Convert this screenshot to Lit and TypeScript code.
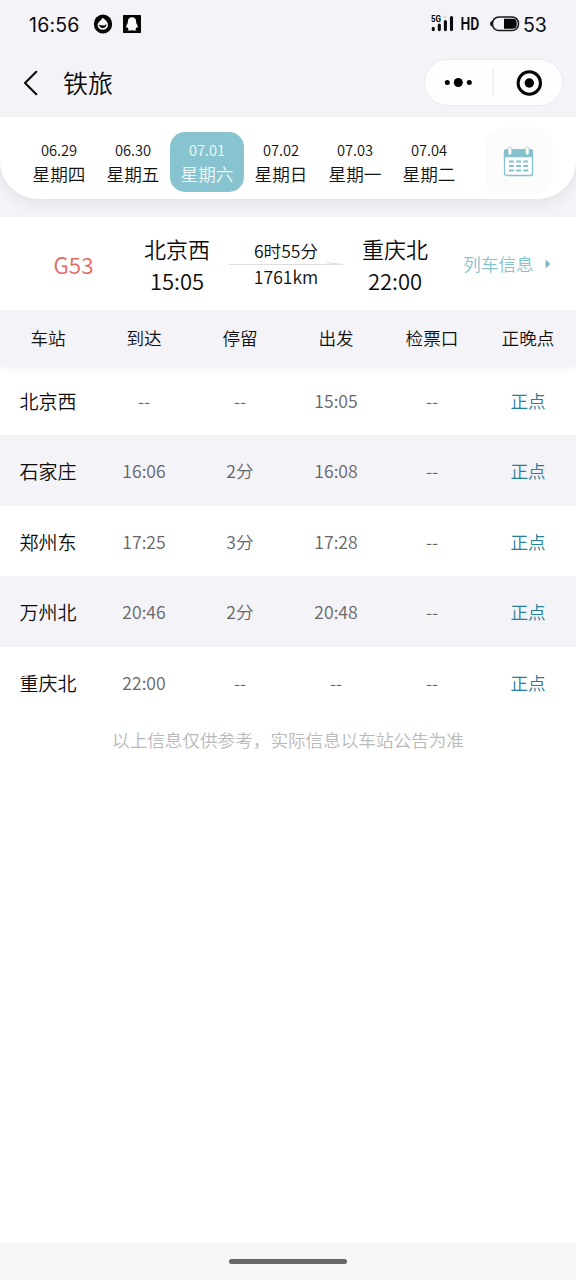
import { LitElement, html, css } from "lit";
import { customElement, state } from "lit/decorators.js";
import { classMap } from "lit/directives/class-map.js";

interface Day { date: string; week: string }
interface Stop { name: string; arrive: string; stay: string; depart: string; gate: string; status: string }

const DAYS: Day[] = [
  { date: "06.29", week: "星期四" },
  { date: "06.30", week: "星期五" },
  { date: "07.01", week: "星期六" },
  { date: "07.02", week: "星期日" },
  { date: "07.03", week: "星期一" },
  { date: "07.04", week: "星期二" },
];

const STOPS: Stop[] = [
  { name: "北京西", arrive: "--", stay: "--", depart: "15:05", gate: "--", status: "正点" },
  { name: "石家庄", arrive: "16:06", stay: "2分", depart: "16:08", gate: "--", status: "正点" },
  { name: "郑州东", arrive: "17:25", stay: "3分", depart: "17:28", gate: "--", status: "正点" },
  { name: "万州北", arrive: "20:46", stay: "2分", depart: "20:48", gate: "--", status: "正点" },
  { name: "重庆北", arrive: "22:00", stay: "--", depart: "--", gate: "--", status: "正点" },
];

const COLUMNS = ["车站", "到达", "停留", "出发", "检票口", "正晚点"];

@customElement("status-bar")
class StatusBar extends LitElement {
  static styles = css`
    :host { display: flex; height: 48px; padding: 0 29px; align-items: center; box-sizing: border-box;
      font-family: Inter, "Noto Sans", sans-serif; color: #0b0b0d; }
    .time { font-size: 19.500px; line-height: 24px; width: 64px; padding-top: 1px; letter-spacing: .2px; }
    .left, .right { display: flex; align-items: center; }
    .right { margin-left: auto; }
    .app { margin-right: 10px; display: block; }
    .hd { font: 600 19px/24px "Roboto", sans-serif; width: 20px; margin-left: 6px; margin-right: 1px; display: flex; justify-content: center; }
    .hd span { display: block; transform: scaleX(.73); }
    .battery { margin-left: 8px; display: block; }
    .level { font-size: 19.500px; line-height: 24px; margin-left: 3px; width: 24px; padding-top: 1px; }
    svg { display: block; }
    .gen { font: 700 8.500px "Roboto", sans-serif; }
  `;
  render() {
    return html`
      <div class="left">
        <span class="time">16:56</span>
        <svg class="app" width="20" height="20" viewBox="0 0 20 20">
          <ellipse cx="10" cy="10" rx="9.2" ry="9.6" fill="#060606" />
          <path d="M9.6 3.8C12 5.4 15 8 15 11a5.2 4.8 0 0 1-10.400 0C4.600 8.400 7.500 7.200 9.600 3.800Z" fill="#f4f3f8" />
          <path d="M5.800 10.300c1.200 1.700 2.400.5 4.100 1.100 1.800.6 2.300-.9 3.600-1.500-.1 2.500-1.500 4.100-3.800 4.100-2.100 0-3.500-1.400-3.900-3.700Z" fill="#060606" />
        </svg>
        <svg width="18" height="18" viewBox="0 0 18 18">
          <rect width="18" height="18" rx=".6" fill="#060606" />
          <path d="M9 2.200c2.700 0 4.100 1.900 4.100 4.300 0 1.100.2 1.700.8 2.700.7 1.200 1 2.400.7 3.300-.3.600-.8.200-1.200-.3-.2.900-.6 1.500-1.100 2 .6.300 1 .7.900 1.300H9.700l-.7-.4-.7.400H4.800c-.1-.6.300-1 .9-1.300-.5-.5-.9-1.100-1.100-2-.4.500-.9.900-1.200.3-.3-.9 0-2.100.7-3.300.6-1 .8-1.600.8-2.700C4.900 4.100 6.300 2.200 9 2.200Z" fill="#fbfbfd" />
        </svg>
      </div>
      <div class="right">
        <svg width="23" height="18" viewBox="0 0 23 18">
          <text class="gen" x="0" y="7" textLength="10" lengthAdjust="spacingAndGlyphs">5G</text>
          <g stroke="#0b0b0d" stroke-width="3.100" stroke-linecap="round">
            <path d="M2.300 13.200v1.400M8.300 10v4.600M14.400 6.500v8.100M20.500 2.500v12.100" />
          </g>
          <path d="M12.600 2h3.200" stroke="#c5c5c9" stroke-width="1" />
        </svg>
        <div class="hd"><span>HD</span></div>
        <svg class="battery" width="31" height="18" viewBox="0 0 31 18">
          <rect x="3.500" y="2" width="26" height="13.600" rx="6.400" fill="none" stroke="#17171a" stroke-width="1.500" />
          <path d="M3.300 5.800Q1 6.500 1 8.800t2.300 3Z" fill="#17171a" />
          <path d="M15 3.800h8.700a4 4 0 0 1 4 4v2a4 4 0 0 1-4 4H15Z" fill="#060606" />
        </svg>
        <span class="level">53</span>
      </div>`;
  }
}

@customElement("nav-bar")
class NavBar extends LitElement {
  static styles = css`
    :host { display: flex; height: 69px; box-sizing: border-box; padding: 0 13px 0 22px; align-items: center;
      font-family: "Noto Sans CJK SC", sans-serif; font-weight: 350; }
    .back { display: block; }
    .title { font-size: 25px; line-height: 36px; margin: 0 0 2px 24px; color: #0a0a0a; }
    .capsule { margin-left: auto; width: 139px; height: 47px; box-sizing: border-box; border: 1px solid #ebebef;
      border-radius: 24px; background: #fefefe; display: flex; align-items: center; justify-content: center; }
    .capsule svg { display: block; }
  `;
  render() {
    return html`
      <svg class="back" width="17" height="28" viewBox="0 0 17 28">
        <path d="M14.300 2.800 3 14l11.300 11.200" fill="none" stroke="#0a0a0a" stroke-width="2.100" stroke-linecap="round" stroke-linejoin="round" />
      </svg>
      <span class="title">铁旅</span>
      <div class="capsule">
        <svg width="137" height="45" viewBox="0 0 137 45">
          <circle cx="22.300" cy="22.500" r="2.500" /><circle cx="33.300" cy="22.500" r="4.500" /><circle cx="44.300" cy="22.500" r="2.500" />
          <path d="M68.200 9v27" stroke="#e4e4e7" stroke-width="1" />
          <circle cx="104.300" cy="23" r="11.200" fill="none" stroke="#050505" stroke-width="3" />
          <circle cx="104.300" cy="23" r="4.700" />
        </svg>
      </div>`;
  }
}

@customElement("date-strip")
class DateStrip extends LitElement {
  @state() private active = 2;
  static styles = css`
    :host { display: block; height: 100px; background: #f3f3f8; overflow: hidden;
      font-family: "Noto Sans CJK SC", sans-serif; font-weight: 350; }
    .panel { height: 82px; box-sizing: border-box; display: flex; padding: 14.500px 22px 0; background: #fff;
      border-radius: 0 0 38px 38px; box-shadow: 0 4px 14px rgba(70, 70, 80, .1); }
    .day { width: 74px; height: 60px; box-sizing: border-box; padding-top: 7px; border-radius: 15px; text-align: center;
      color: #111; cursor: pointer; }
    .date { font-size: 14.700px; line-height: 22px; }
    .week { font-size: 17.600px; line-height: 26px; }
    .on { background: #88c4cf; color: #f2fafb; }
    .calendar { margin-left: 22px; width: 61px; height: 59px; border-radius: 12px; background: #fcfcfc;
      box-shadow: 0 0 6px rgba(0, 0, 0, .05); display: flex; align-items: center; justify-content: center; }
    .calendar svg { display: block; }
  `;
  render() {
    const cells = [0, 1, 2].flatMap((r) => [0, 1, 2].map((c) => ({ x: 6 + c * 7.2, y: 14.600 + r * 4.500 })));
    return html`<div class="panel">
      ${DAYS.map((d, i) => html`
        <div class=${classMap({ day: true, on: i === this.active })} @click=${() => (this.active = i)}>
          <div class="date">${d.date}</div><div class="week">${d.week}</div>
        </div>`)}
      <div class="calendar">
        <svg width="31" height="31" viewBox="0 0 31 31">
          <rect x="1.500" y="3.800" width="28" height="25.700" rx="2" fill="#fdfefe" stroke="#86c2cd" stroke-width="1.300" />
          <path d="M.9 11.300V5.500q0-2.200 2.200-2.200h24.800q2.200 0 2.200 2.200v5.800Z" fill="#86c2cd" />
          <rect x="5" y="1" width="3.800" height="8" rx="1.900" fill="#fff" stroke="#86c2cd" stroke-width=".7" />
          <rect x="22.300" y="1" width="3.800" height="8" rx="1.900" fill="#fff" stroke="#86c2cd" stroke-width=".7" />
          <path fill="#86c2cd" d=${cells.map((c) => `M${c.x} ${c.y}h4.800v1.900h-4.800Z`).join("")} />
        </svg>
      </div>
    </div>`;
  }
}

@customElement("train-summary")
class TrainSummary extends LitElement {
  static styles = css`
    :host { display: grid; grid-template-columns: 122px 110px 108px 110px 126px; height: 93px; align-items: center;
      justify-items: center; background: #fff; color: #0c0c0c; font-family: "Noto Sans CJK SC", sans-serif; font-weight: 350; }
    .code { font-size: 22.400px; line-height: 32px; color: #e26a60; padding-left: 25px; }
    .end { font-size: 22px; line-height: 32px; text-align: center; }
    .mid { width: 116px; font-size: 17.600px; line-height: 24px; text-align: center; }
    .mid svg { display: block; margin: -1px 0 -1px; }
    .info { display: flex; align-items: center; gap: 11px; margin-right: 12px; font-size: 17.600px; line-height: 26px;
      color: #86c2cd; white-space: nowrap; }
  `;
  render() {
    return html`
      <div class="code">G53</div>
      <div class="end">北京西<br />15:05</div>
      <div class="mid">6时55分
        <svg width="116" height="4" viewBox="0 0 116 4"><path d="M1 2.500h114M98 .5l17 2" fill="none" stroke="#dcdddf" stroke-width="1" /></svg>
        1761km</div>
      <div class="end">重庆北<br />22:00</div>
      <div class="info">列车信息<svg width="6" height="10" viewBox="0 0 6 10"><path d="M.5.500 5.500 5l-5 4.500Z" fill="#7dbdca" /></svg></div>`;
  }
}

@customElement("stop-table")
class StopTable extends LitElement {
  static styles = css`
    :host { display: block; font-family: "Noto Sans CJK SC", sans-serif; font-weight: 350; font-size: 17.600px; line-height: 26px; }
    .row { display: grid; grid-template-columns: repeat(6, 1fr); height: 70.400px; align-items: center;
      box-sizing: border-box; padding-top: 1.600px; text-align: center; color: #666669; background: #fff; }
    .row:nth-child(odd) { background: #f4f3f8; }
    .row.head { height: 55px; color: #111; background: #f4f3f8; position: relative; padding-top: 0;
      box-shadow: 0 4px 6px rgba(120, 120, 125, .09); }
    .name { font-size: 19px; color: #0c0c0c; }
    .ok { color: #26809a; }
    .note { text-align: center; color: #b9b9bb; padding-top: 10px; }
  `;
  render() {
    return html`
      <div class="row head">${COLUMNS.map((c) => html`<span>${c}</span>`)}</div>
      ${STOPS.map((s) => html`<div class="row">
        <span class="name">${s.name}</span><span>${s.arrive}</span><span>${s.stay}</span>
        <span>${s.depart}</span><span>${s.gate}</span><span class="ok">${s.status}</span>
      </div>`)}
      <div class="note">以上信息仅供参考，实际信息以车站公告为准</div>`;
  }
}

@customElement("app-root")
class AppRoot extends LitElement {
  static styles = css`
    :host { display: flex; flex-direction: column; width: 576px; height: 1280px; background: #fff; overflow: hidden; }
    .top { background: #f4f3f8; }
    .home { margin-top: auto; height: 37px; background: #f6f6f6; display: flex; align-items: center; justify-content: center; }
    .bar { width: 118px; height: 5px; border-radius: 3px; background: #666; }
  `;
  render() {
    return html`
      <div class="top"><status-bar></status-bar><nav-bar></nav-bar></div>
      <date-strip></date-strip>
      <train-summary></train-summary>
      <stop-table></stop-table>
      <div class="home"><div class="bar"></div></div>`;
  }
}
